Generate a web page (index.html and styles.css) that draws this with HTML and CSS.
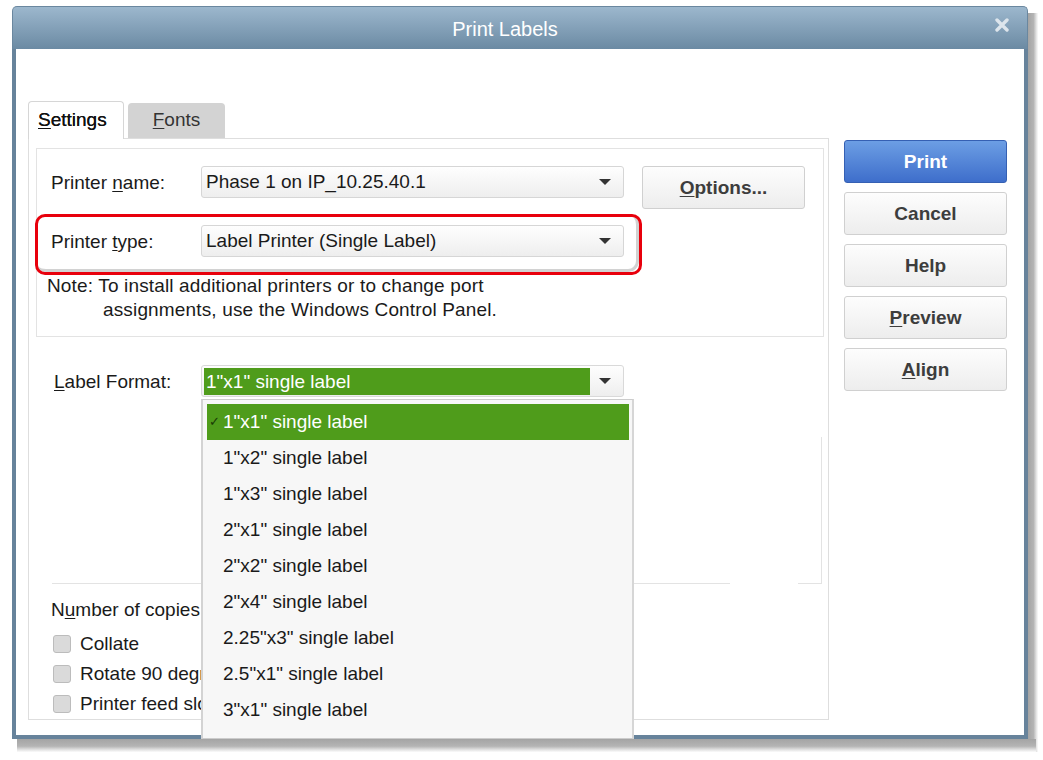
FILE: index.html
```html
<!DOCTYPE html>
<html>
<head>
<meta charset="utf-8">
<title>Print Labels</title>
<link rel="stylesheet" href="styles.css">
</head>
<body>
<div class="frame">
<div class="window">
  <div class="titlebar">
    <span class="title">Print Labels</span>
    <svg class="close" width="14" height="14" viewBox="0 0 14 14"><path d="M2 2 L12 12 M12 2 L2 12" stroke="#dde5ec" stroke-width="3.4" stroke-linecap="round"/></svg>
  </div>
  <div class="body">
    <div class="left">
      <div class="tabs">
        <div class="tab active"><u>S</u>ettings</div>
        <div class="tab inactive"><u>F</u>onts</div>
      </div>
      <div class="panel">
        <div class="group">
          <div class="row">
            <div class="label">Printer <u>n</u>ame:</div>
            <div class="select"><span class="val">Phase 1 on IP_10.25.40.1</span><span class="arrow"></span></div>
            <div class="btn options"><u>O</u>ptions...</div>
          </div>
          <div class="row row2">
            <div class="label">Printer <u>t</u>ype:</div>
            <div class="select"><span class="val">Label Printer (Single Label)</span><span class="arrow"></span></div>
            <div class="highlight"></div>
          </div>
          <div class="note">
            <span class="line">Note: To install additional printers or to change port</span>
            <span class="line indent">assignments, use the Windows Control Panel.</span>
          </div>
        </div>
        <div class="row format">
          <div class="label fmt-label"><u>L</u>abel Format:</div>
          <div class="select green"><span class="val">1"x1" single label</span><span class="arrow"></span>
            <div class="dropdown">
              <div class="item selected"><span class="check">✓</span>1"x1" single label</div>
              <div class="item"><span class="check"></span>1"x2" single label</div>
              <div class="item"><span class="check"></span>1"x3" single label</div>
              <div class="item"><span class="check"></span>2"x1" single label</div>
              <div class="item"><span class="check"></span>2"x2" single label</div>
              <div class="item"><span class="check"></span>2"x4" single label</div>
              <div class="item"><span class="check"></span>2.25"x3" single label</div>
              <div class="item"><span class="check"></span>2.5"x1" single label</div>
              <div class="item"><span class="check"></span>3"x1" single label</div>
            </div>
          </div>
        </div>
        <div class="box2"></div>
        <div class="copies">N<u>u</u>mber of copies</div>
        <div class="checks">
          <div class="chk"><span class="cb"></span>Collate</div>
          <div class="chk"><span class="cb"></span>Rotate 90 degrees</div>
          <div class="chk"><span class="cb"></span>Printer feed slot</div>
        </div>
      </div>
    </div>
    <div class="side">
      <div class="btn primary">Print</div>
      <div class="btn">Cancel</div>
      <div class="btn">Help</div>
      <div class="btn"><u>P</u>review</div>
      <div class="btn"><u>A</u>lign</div>
    </div>
  </div>
</div>
</div>
</body>
</html>
```
FILE: styles.css
```css
* { box-sizing: border-box; }
html, body { background: #fff; }
body {
  margin: 0;
  font-family: "Liberation Sans", Arial, sans-serif;
  font-size: 19px;
  color: #1a1a1a;
}
u { text-decoration: underline; text-underline-offset: 2px; }

.frame {
  margin: 6px 0 0 12px;
  width: 1026px;
  height: 747px;
  background:
    linear-gradient(#a4a4a4, #b4b4b4 55%, #e6e6e6 85%, #fbfbfb) no-repeat 5px 733px / 1019px 13px,
    linear-gradient(to right, #a4a4a4, #b4b4b4 55%, #e6e6e6 85%, #fbfbfb) no-repeat 1016px 7px / 10px 739px;
}
.window {
  width: 1016px;
  height: 733px;
  border-radius: 5px 5px 0 0;
  display: flex;
  flex-direction: column;
}
.titlebar {
  height: 43px;
  background: linear-gradient(#9cb7cd, #6b8aa3);
  border-radius: 5px 5px 0 0;
  border: 1px solid #6a879f;
  border-bottom: none;
  display: grid;
  grid-template-columns: 1fr auto 1fr;
  align-items: center;
}
.title {
  grid-column: 2;
  color: #fff;
  font-size: 20px;
  margin-right: 30px;
  margin-top: 2px;
}
.close {
  grid-column: 3;
  justify-self: end;
  align-self: start;
  margin: 11px 18px 0 0;
}
.body {
  flex: 1;
  background: #fff;
  border: 4px solid #67839b;
  border-top: none;
  display: flex;
  padding: 52px 0 0 12px;
}
.left { width: 801px; }
.tabs {
  display: flex;
  align-items: flex-end;
  gap: 4px;
  height: 38px;
  margin-bottom: -1px;
  position: relative;
  z-index: 1;
}
.tab {
  border-radius: 4px 4px 0 0;
}
.tab.active {
  width: 96px;
  height: 38px;
  background: #fff;
  border: 1px solid #d6d6d6;
  border-bottom: none;
  padding-left: 9px;
  line-height: 36px;
  color: #111;
  text-shadow: 0 0 0.5px #111;
}
.tab.inactive {
  width: 97px;
  height: 35px;
  margin-bottom: 1px;
  background: #d3d3d3;
  text-align: center;
  line-height: 33px;
  color: #333;
}
.panel {
  height: 582px;
  border: 1px solid #dedede;
}
.group {
  margin: 9px 4px 0 7px;
  height: 189px;
  border: 1px solid #e3e3e3;
  padding: 17px 0 0 14px;
}
.row {
  display: flex;
  align-items: flex-start;
  position: relative;
}
.label {
  width: 150px;
  height: 32px;
  line-height: 34px;
  flex: none;
}
.select {
  width: 423px;
  height: 32px;
  flex: none;
  border: 1px solid #d6d6d6;
  border-radius: 3px;
  background: linear-gradient(#fefefe, #eeeeee);
  display: flex;
  align-items: center;
  padding-left: 4px;
  position: relative;
}
.select .val { flex: 1; white-space: nowrap; }
.arrow {
  width: 0;
  height: 0;
  border-left: 6px solid transparent;
  border-right: 6px solid transparent;
  border-top: 6px solid #333;
  margin: 0 12px 0 auto;
}
.options {
  margin-left: 18px;
  width: 163px;
  height: 42px;
}
.row2 { margin-top: 16px; }
.highlight {
  position: absolute;
  left: -16px;
  top: -11px;
  width: 604px;
  height: 58px;
  border-right: 3px solid #d2d2d2;
  border-bottom: 3px solid #d2d2d2;
  border-radius: 11px;
  pointer-events: none;
}
.highlight::before {
  content: "";
  position: absolute;
  left: 0;
  top: 0;
  width: 601px;
  height: 55px;
  border: 3px solid #e8000c;
  border-radius: 10px;
}
.note {
  margin: 17px 0 0 -4px;
  line-height: 24px;
  letter-spacing: 0.15px;
}
.note .line { display: block; white-space: nowrap; }
.note .indent { padding-left: 56px; }

.format { margin-top: 28px; padding-left: 25px; }
.fmt-label { width: 147px; }
.select.green { padding-left: 2px; border-color: #d9d9d9; }
.select.green .val {
  flex: none;
  width: 386px;
  height: 27px;
  line-height: 27px;
  background: #4f9c1b;
  color: #fff;
  padding-left: 2px;
}
.dropdown {
  position: absolute;
  left: -1px;
  top: 33px;
  width: 433px;
  height: 340px;
  overflow: hidden;
  background: #f7f7f7;
  border: 1px solid #cccccc;
  border-left: 2px solid #d3d3d3;
  border-right: 2px solid #d6d6d6;
  padding: 4px 3px 0 4px;
  z-index: 5;
}
.item {
  height: 36px;
  line-height: 36px;
  display: flex;
  color: #1a1a1a;
  white-space: nowrap;
}
.item .check {
  width: 14px;
  margin-left: 2px;
  font-size: 13px;
  flex: none;
}
.item.selected {
  background: #4f9c1b;
  color: #fff;
}
.item.selected .check { color: #1a3a05; }

.box2 {
  margin: 40px 6px 0 23px;
  height: 147px;
  border-right: 1px solid #e3e3e3;
  background: linear-gradient(to right, #e3e3e3 0 678px, transparent 678px 746px, #e3e3e3 746px) bottom / 100% 1px no-repeat;
}
.copies {
  margin-top: 14px;
  padding-left: 22px;
  line-height: 24px;
  white-space: nowrap;
}
.checks { margin-top: 7px; }
.chk {
  height: 30px;
  display: flex;
  align-items: center;
  padding-left: 24px;
  gap: 9px;
  white-space: nowrap;
}
.cb {
  width: 18px;
  height: 18px;
  background: #dadada;
  border: 1px solid #bcbcbc;
  border-radius: 3px;
  flex: none;
}

.side {
  margin-left: 15px;
  padding-top: 39px;
  display: flex;
  flex-direction: column;
  gap: 9px;
}
.btn {
  width: 163px;
  height: 43px;
  border: 1px solid #d0d0d0;
  border-radius: 3px;
  background: linear-gradient(#fdfdfd, #ededed);
  display: flex;
  align-items: center;
  justify-content: center;
  font-weight: bold;
  color: #3d3d3d;
}
.btn.primary {
  background: linear-gradient(#6c9ee4, #3e6ecb);
  border-color: #3560b3;
  color: #fff;
}
```
